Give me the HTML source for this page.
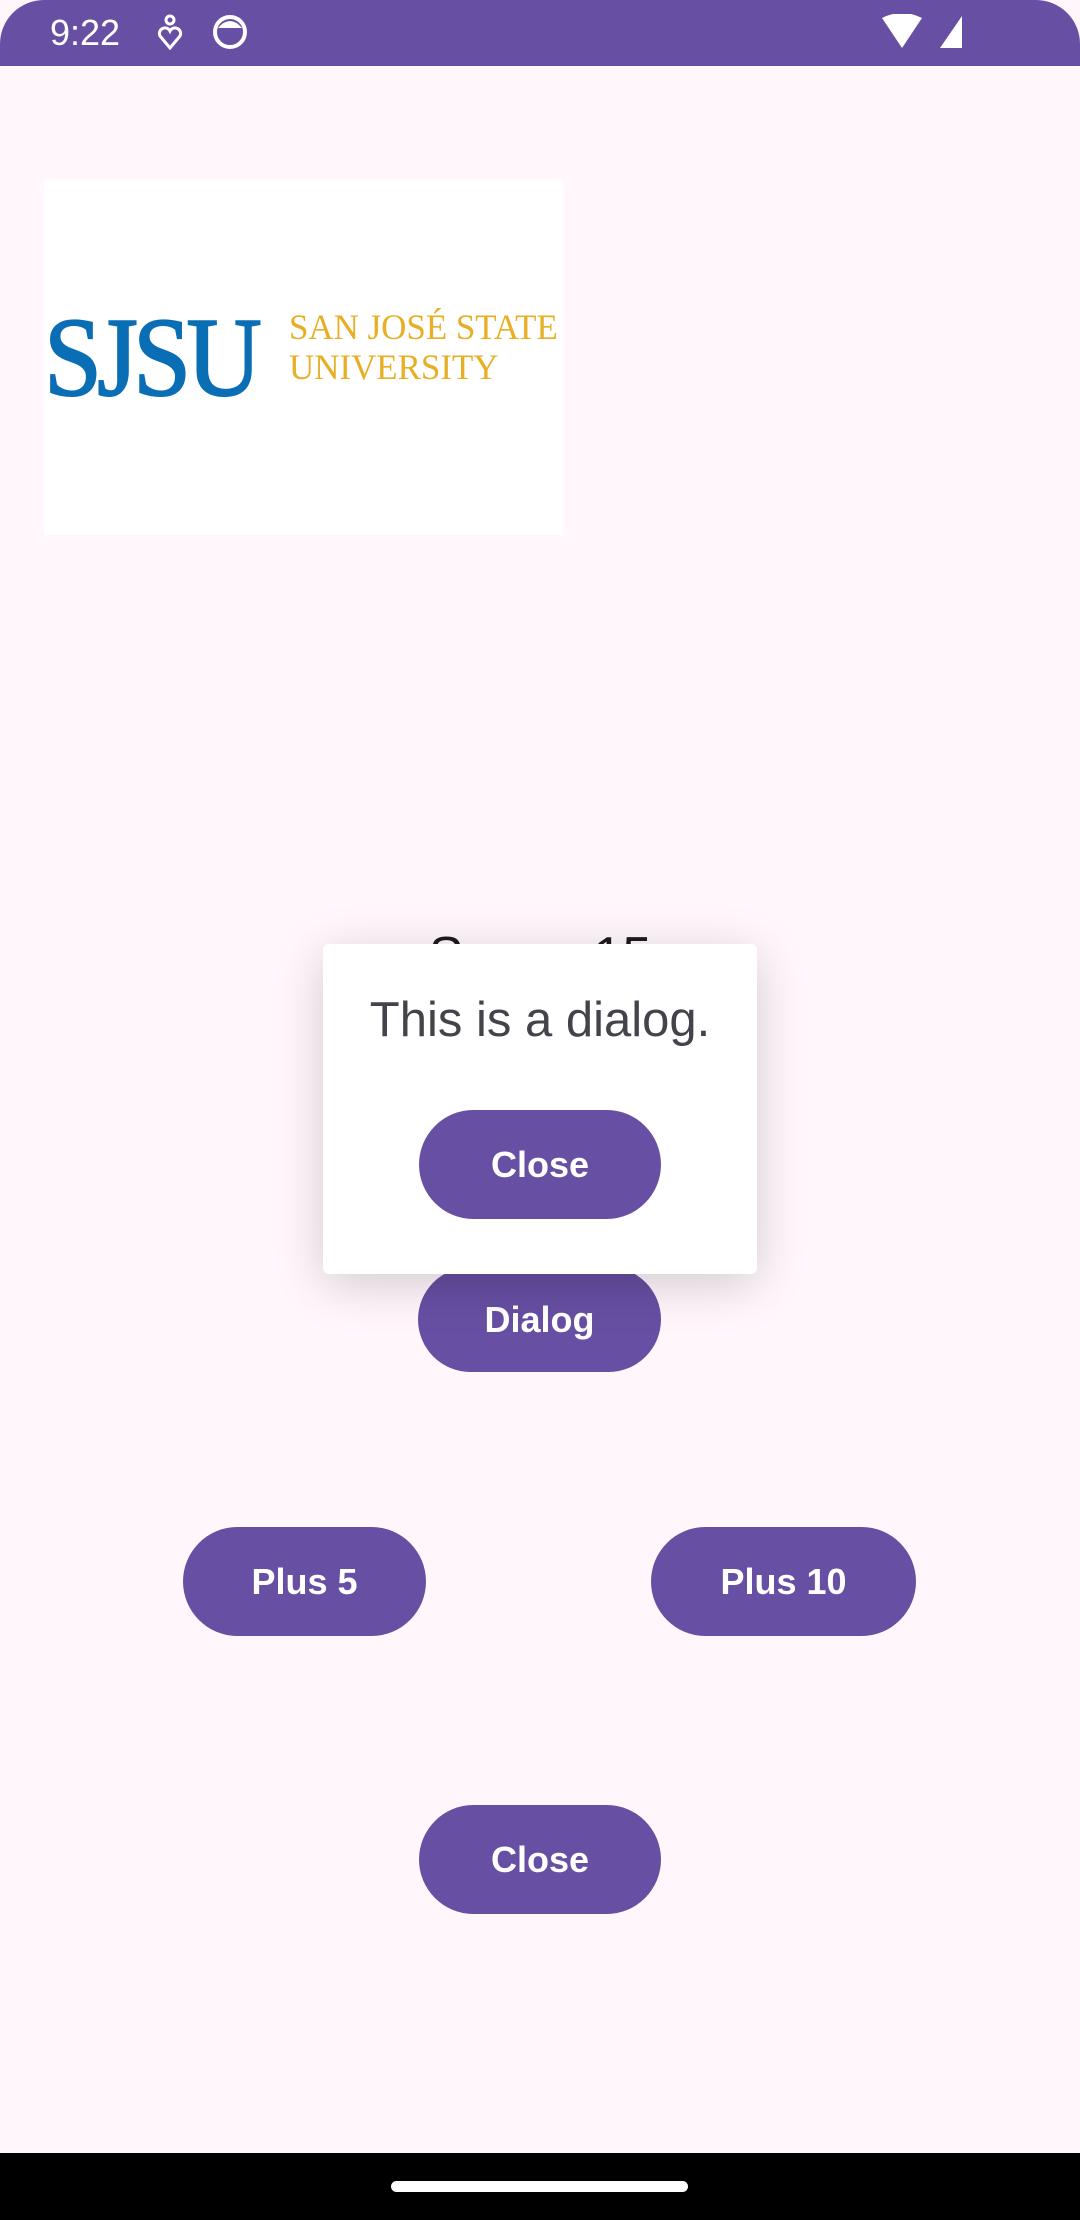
<!DOCTYPE html>
<html><head><meta charset="utf-8"><style>
*{margin:0;padding:0;box-sizing:border-box}
body{width:1080px;height:2220px;background:#FFF7FC;position:relative;overflow:hidden;font-family:"Liberation Sans",Roboto,sans-serif}
.sb{position:absolute;left:0;top:0;width:1080px;height:66px;background:#674FA3;border-radius:44px 44px 0 0;color:#fff}
.btn{position:absolute;background:#674FA3;color:#fff;border-radius:60px;font-size:36px;font-weight:bold;display:flex;align-items:center;justify-content:center}
.nav{position:absolute;left:0;top:2153px;width:1080px;height:67px;background:#000}
</style></head><body>
<div class="sb">
 <div style="position:absolute;left:50px;top:12px;font-size:36px">9:22</div>
 <svg style="position:absolute;left:155px;top:14px" width="30" height="36" viewBox="0 0 30 36"><circle cx="15" cy="6" r="4" fill="none" stroke="#fff" stroke-width="3"/><path d="M15 34 L5 22 A5 5 0 0 1 15 17 A5 5 0 0 1 25 22 Z" fill="none" stroke="#fff" stroke-width="3"/></svg>
 <svg style="position:absolute;left:212px;top:14px" width="36" height="36"><circle cx="18" cy="18" r="15" fill="none" stroke="#fff" stroke-width="4"/><path d="M6 14 Q18 0 30 14 Z" fill="#fff"/></svg>
 <svg style="position:absolute;left:880px;top:14px" width="90" height="36"><path d="M2 4 Q22 -6 42 4 L22 34 Z" fill="#fff"/><path d="M82 2 L82 34 L60 34 Z" fill="#fff"/></svg>
</div>
<div style="position:absolute;left:44px;top:180px;width:519px;height:355px;background:#fff"></div>
<div style="position:absolute;left:44px;top:300px;font-family:'Liberation Serif',serif;color:#0A6EB4;font-size:112px;line-height:116px;letter-spacing:-5px;transform:scaleX(0.93);transform-origin:left;-webkit-text-stroke:2px #0A6EB4">SJSU</div>
<div style="position:absolute;left:289px;top:307px;font-family:'Liberation Serif',serif;color:#E8AE24;font-size:36px;line-height:40px;white-space:nowrap;transform:scaleX(0.97);transform-origin:left">SAN JOSÉ STATE<br>UNIVERSITY</div>
<div style="position:absolute;left:0;width:1080px;top:926px;text-align:center;font-size:52px;color:#1c1b1f">Score: 15</div>
<div class="btn" style="left:418px;top:1267px;width:243px;height:105px">Dialog</div>
<div class="btn" style="left:183px;top:1527px;width:243px;height:109px">Plus 5</div>
<div class="btn" style="left:651px;top:1527px;width:265px;height:109px">Plus 10</div>
<div class="btn" style="left:419px;top:1805px;width:242px;height:109px">Close</div>
<div style="position:absolute;left:323px;top:944px;width:434px;height:330px;background:#fff;border-radius:6px;box-shadow:0 10px 50px rgba(0,0,0,0.18)">
 <div style="position:absolute;left:0;width:100%;top:48px;text-align:center;font-size:49px;color:#45424b">This is a dialog.</div>
 <div class="btn" style="left:96px;top:166px;width:242px;height:109px">Close</div>
</div>
<div class="nav"><div style="position:absolute;left:391px;top:28px;width:297px;height:11px;border-radius:6px;background:#fff"></div></div>
</body></html>
